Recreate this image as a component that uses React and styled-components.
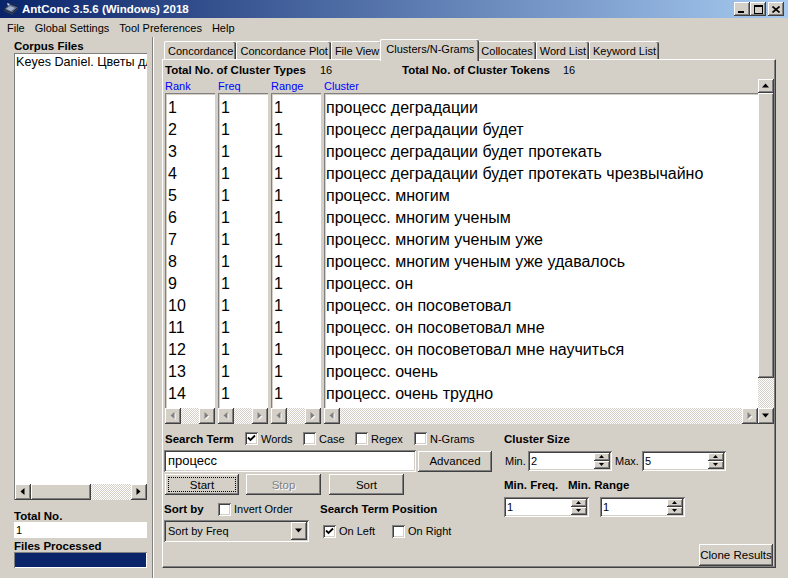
import React from "react";
import styled, { createGlobalStyle, css } from "styled-components";

const FACE = "#d4d0c8";

const GlobalStyle = createGlobalStyle`
  html, body {
    margin: 0;
    padding: 0;
    background: ${FACE};
    overflow: hidden;
  }
  #root {
    width: 788px;
    height: 578px;
  }
`;

// ==== bevels ====

const raised = css`
  background: ${FACE};
  box-shadow: inset -1px -1px #404040, inset 1px 1px #ffffff,
    inset -2px -2px #808080, inset 2px 2px ${FACE};
`;

const sunken = css`
  background: #ffffff;
  box-shadow: inset 1px 1px #808080, inset -1px -1px #ffffff,
    inset 2px 2px #404040, inset -2px -2px ${FACE};
`;

const checker = css`
  background: repeating-conic-gradient(#ffffff 0 25%, ${FACE} 0 50%) 0 0 / 2px 2px;
`;

// ==== data ====

const clusters = [
  "процесс деградации",
  "процесс деградации будет",
  "процесс деградации будет протекать",
  "процесс деградации будет протекать чрезвычайно",
  "процесс. многим",
  "процесс. многим ученым",
  "процесс. многим ученым уже",
  "процесс. многим ученым уже удавалось",
  "процесс. он",
  "процесс. он посоветовал",
  "процесс. он посоветовал мне",
  "процесс. он посоветовал мне научиться",
  "процесс. очень",
  "процесс. очень трудно",
];

const tabs = [
  "Concordance",
  "Concordance Plot",
  "File View",
  "Clusters/N-Grams",
  "Collocates",
  "Word List",
  "Keyword List",
];

// ==== small drawings ====

const Tri = ({ dir, w = 16, h = 16, disabled, small }) => {
  const cx = w / 2 - 0.5;
  const cy = h / 2 - 0.5;
  const a = small ? 1.5 : 2;
  const b = small ? 2.5 : 3.5;
  let pts;
  if (dir === "left") pts = [[cx - a, cy], [cx + a, cy - b], [cx + a, cy + b]];
  if (dir === "right") pts = [[cx + a, cy], [cx - a, cy - b], [cx - a, cy + b]];
  if (dir === "up") pts = [[cx, cy - a], [cx - b, cy + a], [cx + b, cy + a]];
  if (dir === "down") pts = [[cx, cy + a], [cx - b, cy - a], [cx + b, cy - a]];
  const s = (dx) => pts.map(([x, y]) => `${x + dx},${y + dx}`).join(" ");
  return (
    <svg width={w} height={h} style={{ display: "block" }}>
      {disabled && <polygon points={s(1)} fill="#ffffff" />}
      <polygon points={s(0)} fill={disabled ? "#808080" : "#000000"} />
    </svg>
  );
};

const CheckMark = () => (
  <svg width="9" height="9" viewBox="0 0 9 9" style={{ display: "block" }}>
    <path d="M1 3.5 L3.5 6 L8 1.5" stroke="#000" strokeWidth="1.8" fill="none" />
  </svg>
);

const AppIcon = () => (
  <svg width="16" height="16" viewBox="0 0 16 16" style={{ display: "block" }}>
    <path d="M1 8 L7 3 L15 6 L9 12 Z" fill="#5b6b88" stroke="#1d2640" strokeWidth="1" />
    <path d="M3 8 L7 5 L12 7 L8 10 Z" fill="#9fb0cc" />
    <path d="M1 8 L1 10 L9 14 L15 8 L15 6 L9 12 Z" fill="#2e3a58" />
    <path d="M4 2 L7 3 L5 5 Z" fill="#cfd8e8" />
  </svg>
);

// ==== window chrome ====

const Window = styled.div`
  width: 788px;
  height: 578px;
  display: flex;
  flex-direction: column;
  background: ${FACE};
  font-family: "Liberation Sans", Arial, sans-serif;
  font-size: 11px;
  color: #000;
`;

const TitleBar = styled.div`
  flex: none;
  height: 18px;
  display: flex;
  align-items: center;
  padding: 0 4px 0 3px;
  background: linear-gradient(to right, #0a246a, #a6caf0);
`;

const Title = styled.span`
  margin-left: 3px;
  color: #ffffff;
  font-weight: bold;
  font-size: 11.5px;
  white-space: nowrap;
`;

const CaptionGroup = styled.div`
  margin-left: auto;
  display: flex;
`;

const CaptionBtn = styled.div`
  ${raised};
  width: 16px;
  height: 14px;
  margin-left: ${(p) => p.$gap || 0}px;
  display: flex;
  align-items: center;
  justify-content: center;
`;

const MenuBar = styled.div`
  flex: none;
  height: 19px;
  display: flex;
  align-items: center;
  gap: 10px;
  padding-left: 7px;
`;

const Body = styled.div`
  flex: 1;
  display: flex;
  min-height: 0;
`;

// ==== left panel ====

const LeftPanel = styled.div`
  width: 152px;
  box-sizing: border-box;
  padding: 2px 5px 10px 14px;
  display: flex;
  flex-direction: column;
`;

const BoldLabel = styled.div`
  flex: none;
  font-weight: bold;
  font-size: 11.5px;
  height: ${(p) => p.$h || 14}px;
  line-height: ${(p) => p.$h || 14}px;
  width: ${(p) => (p.$w ? `${p.$w}px` : "auto")};
  margin-top: ${(p) => p.$mt || 0}px;
  padding-left: ${(p) => p.$pl || 0}px;
  white-space: nowrap;
  box-sizing: border-box;
`;

const CorpusList = styled.div`
  flex: 1;
  display: flex;
  flex-direction: column;
  background: #ffffff;
  border-top: 1px solid #808080;
  border-left: 1px solid #808080;
  min-height: 0;
`;

const CorpusItems = styled.div`
  flex: 1;
  padding: 1px 0 0 1px;
  font-size: 12.6px;
  line-height: 15px;
  white-space: nowrap;
  overflow: hidden;
`;

const HScroll = styled.div`
  flex: none;
  height: 16px;
  display: flex;
`;

const ScrollBtn = styled.div`
  ${raised};
  flex: none;
  width: 16px;
  height: ${(p) => p.$h || 16}px;
`;

const Thumb = styled.div`
  ${raised};
  flex: none;
  width: ${(p) => (p.$w ? `${p.$w}px` : "auto")};
  height: ${(p) => (p.$h ? `${p.$h}px` : "auto")};
`;

const Trough = styled.div`
  ${checker};
  flex: 1;
`;

const Field = styled.div`
  flex: none;
  height: 16px;
  line-height: 16px;
  padding-left: 2px;
  background: #ffffff;
`;

const ProgressBar = styled.div`
  flex: none;
  height: 16px;
  background: #0a246a;
  box-shadow: inset 1px 1px #808080, inset -1px -1px #ffffff;
`;

const Splitter = styled.div`
  flex: none;
  width: 3px;
  box-shadow: inset 1px 0 #808080, inset 2px 0 #ffffff;
`;

// ==== right panel ====

const RightPanel = styled.div`
  flex: 1;
  display: flex;
  flex-direction: column;
  padding: 0 12px 10px 7px;
  min-width: 0;
`;

const TabStrip = styled.div`
  flex: none;
  height: 22px;
  display: flex;
  align-items: flex-end;
  padding-left: 2px;
`;

const Tab = styled.div`
  position: relative;
  height: ${(p) => (p.$active ? 22 : 18)}px;
  margin: 0 ${(p) => (p.$active ? -2 : 0)}px ${(p) => (p.$active ? -2 : 0)}px;
  padding: 0 ${(p) => (p.$active ? 5 : 3)}px ${(p) => (p.$active ? 3 : 0)}px;
  z-index: ${(p) => (p.$active ? 2 : 1)};
  box-sizing: border-box;
  display: flex;
  align-items: center;
  background: ${FACE};
  border-top: 1px solid #ffffff;
  border-left: 1px solid #ffffff;
  border-radius: 2px 2px 0 0;
  box-shadow: inset -1px 0 #404040, inset -2px 0 #808080;
  white-space: nowrap;
`;

const TabPage = styled.div`
  flex: 1;
  display: flex;
  flex-direction: column;
  padding: 0 0 0 1px;
  border-top: 1px solid #ffffff;
  border-left: 1px solid #ffffff;
  border-right: 1px solid #404040;
  border-bottom: 1px solid #404040;
  box-shadow: inset -1px -1px #808080;
  min-height: 0;
`;

const StatsRow = styled.div`
  flex: none;
  height: 16px;
  margin-top: 2px;
  display: flex;
  align-items: center;
`;

const StatValue = styled.span`
  width: ${(p) => p.$w}px;
  flex: none;
`;

const Results = styled.div`
  flex: none;
  display: flex;
  margin-left: 1px;
  margin-top: 1px;
  margin-right: 1px;
`;

const ColumnsGrid = styled.div`
  flex: 1;
  display: grid;
  grid-template-columns: 50px 50px 50px 1fr;
  grid-template-rows: 14px 315px 16px;
  column-gap: 3px;
  min-width: 0;
`;

const ColHead = styled.div`
  color: #0000ff;
  font-size: 11px;
  line-height: 14px;
`;

const ColList = styled.div`
  background: #ffffff;
  box-shadow: inset 1px 1px #808080, inset 2px 2px ${FACE};
  padding: 4px 0 0 ${(p) => p.$pl || 3}px;
  font-size: 16px;
  overflow: hidden;
`;

const Cell = styled.div`
  height: 22px;
  line-height: 22px;
  white-space: nowrap;
`;

const VScroll = styled.div`
  flex: none;
  width: 16px;
  display: flex;
  flex-direction: column;
`;

// ==== controls ====

const Controls = styled.div`
  flex: 1;
  display: flex;
  margin-top: 7px;
  min-height: 0;
`;

const LeftControls = styled.div`
  width: 340px;
  flex: none;
  display: flex;
  flex-direction: column;
`;

const RightControls = styled.div`
  flex: 1;
  display: flex;
  flex-direction: column;
  align-items: flex-start;
  padding-right: 2px;
  padding-bottom: 1px;
`;

const Row = styled.div`
  flex: none;
  display: flex;
  align-items: center;
  height: ${(p) => p.$h}px;
  margin-top: ${(p) => p.$mt || 0}px;
`;

const CheckItem = styled.label`
  flex: none;
  display: flex;
  align-items: center;
  gap: 3px;
  width: ${(p) => (p.$w ? `${p.$w}px` : "auto")};
  margin-left: ${(p) => p.$ml || 0}px;
  white-space: nowrap;
`;

const Box = styled.span`
  ${sunken};
  width: 13px;
  height: 13px;
  flex: none;
  display: flex;
  align-items: center;
  justify-content: center;
`;

const TextInput = styled.div`
  ${sunken};
  width: 252px;
  height: 22px;
  box-sizing: border-box;
  padding-left: 4px;
  font-size: 13px;
  line-height: 22px;
`;

const Button = styled.div`
  ${raised};
  flex: none;
  width: ${(p) => p.$w}px;
  height: ${(p) => p.$h || 21}px;
  margin-left: ${(p) => p.$ml || 0}px;
  box-sizing: border-box;
  display: flex;
  align-items: center;
  justify-content: center;
  position: relative;
  color: ${(p) => (p.$disabled ? "#808080" : "#000")};
  text-shadow: ${(p) => (p.$disabled ? "1px 1px #ffffff" : "none")};
  font-size: 11.5px;
`;

const FocusRing = styled.span`
  position: absolute;
  inset: 3px;
  border: 1px dotted #000;
`;

const Select = styled.div`
  ${sunken};
  width: 145px;
  height: 22px;
  box-sizing: border-box;
  padding: 2px;
  display: flex;
  align-items: center;
  background: ${FACE};
`;

const SelectText = styled.span`
  flex: 1;
  padding-left: 2px;
`;

const Spin = styled.div`
  ${sunken};
  width: ${(p) => p.$w}px;
  height: 20px;
  box-sizing: border-box;
  padding: 2px;
  margin-left: ${(p) => p.$ml || 0}px;
  display: flex;
  flex: none;
`;

const SpinValue = styled.span`
  flex: 1;
  padding-left: 1px;
  line-height: 16px;
`;

const SpinBtns = styled.div`
  flex: none;
  width: 16px;
  display: flex;
  flex-direction: column;
`;

const SpinHalf = styled.div`
  ${raised};
  flex: 1;
  display: flex;
  align-items: center;
  justify-content: center;
`;

const SmallLabel = styled.span`
  flex: none;
  width: ${(p) => p.$w}px;
  padding-left: ${(p) => p.$pl || 0}px;
  margin-left: ${(p) => p.$ml || 0}px;
  box-sizing: border-box;
`;

const CloneButton = styled(Button)`
  margin-top: auto;
  align-self: flex-end;
`;

// ==== pieces ====

const Check = ({ checked, children, ...rest }) => (
  <CheckItem {...rest}>
    <Box>{checked && <CheckMark />}</Box>
    <span>{children}</span>
  </CheckItem>
);

const SpinBox = ({ value, w, ml }) => (
  <Spin $w={w} $ml={ml}>
    <SpinValue>{value}</SpinValue>
    <SpinBtns>
      <SpinHalf>
        <Tri dir="up" w={8} h={6} small />
      </SpinHalf>
      <SpinHalf>
        <Tri dir="down" w={8} h={6} small />
      </SpinHalf>
    </SpinBtns>
  </Spin>
);

const ColScroll = ({ right = true }) => (
  <HScroll>
    <ScrollBtn>
      <Tri dir="left" disabled />
    </ScrollBtn>
    <Trough />
    {right && (
      <ScrollBtn>
        <Tri dir="right" disabled />
      </ScrollBtn>
    )}
  </HScroll>
);

const App = () => {
  return (
    <Window>
      <GlobalStyle />
      <TitleBar>
        <AppIcon />
        <Title>AntConc 3.5.6 (Windows) 2018</Title>
        <CaptionGroup>
          <CaptionBtn>
            <svg width="8" height="7" style={{ display: "block" }}>
              <rect x="0" y="5" width="6" height="2" fill="#000" />
            </svg>
          </CaptionBtn>
          <CaptionBtn>
            <svg width="9" height="9" style={{ display: "block" }}>
              <rect x="0.5" y="0.5" width="8" height="8" fill="none" stroke="#000" />
              <rect x="0" y="1" width="9" height="1" fill="#000" />
            </svg>
          </CaptionBtn>
          <CaptionBtn $gap={2}>
            <svg width="8" height="7" style={{ display: "block" }}>
              <path d="M0.5 0.5 L7.5 6.5 M7.5 0.5 L0.5 6.5" stroke="#000" strokeWidth="1.6" />
            </svg>
          </CaptionBtn>
        </CaptionGroup>
      </TitleBar>

      <MenuBar>
        <span>File</span>
        <span>Global Settings</span>
        <span>Tool Preferences</span>
        <span>Help</span>
      </MenuBar>

      <Body>
        <LeftPanel>
          <BoldLabel>Corpus Files</BoldLabel>
          <CorpusList>
            <CorpusItems>Keyes Daniel. Цветы для</CorpusItems>
            <HScroll>
              <ScrollBtn>
                <Tri dir="left" />
              </ScrollBtn>
              <Thumb $w={60} />
              <Trough />
              <ScrollBtn>
                <Tri dir="right" />
              </ScrollBtn>
            </HScroll>
          </CorpusList>
          <BoldLabel $mt={10} $h={12}>
            Total No.
          </BoldLabel>
          <Field>1</Field>
          <BoldLabel $mt={2} $h={12}>
            Files Processed
          </BoldLabel>
          <ProgressBar />
        </LeftPanel>

        <Splitter />

        <RightPanel>
          <TabStrip>
            {tabs.map((t) => (
              <Tab key={t} $active={t === "Clusters/N-Grams"}>
                {t}
              </Tab>
            ))}
          </TabStrip>

          <TabPage>
            <StatsRow>
              <BoldLabel $w={156} $pl={1}>
                Total No. of Cluster Types
              </BoldLabel>
              <StatValue $w={82}>16</StatValue>
              <BoldLabel $w={161}>Total No. of Cluster Tokens</BoldLabel>
              <StatValue $w={40}>16</StatValue>
            </StatsRow>

            <Results>
              <ColumnsGrid>
                <ColHead>Rank</ColHead>
                <ColHead>Freq</ColHead>
                <ColHead>Range</ColHead>
                <ColHead>Cluster</ColHead>

                <ColList>
                  {clusters.map((_, i) => (
                    <Cell key={i}>{i + 1}</Cell>
                  ))}
                </ColList>
                <ColList>
                  {clusters.map((_, i) => (
                    <Cell key={i}>1</Cell>
                  ))}
                </ColList>
                <ColList>
                  {clusters.map((_, i) => (
                    <Cell key={i}>1</Cell>
                  ))}
                </ColList>
                <ColList $pl={2}>
                  {clusters.map((c, i) => (
                    <Cell key={i}>{c}</Cell>
                  ))}
                </ColList>

                <ColScroll />
                <ColScroll />
                <ColScroll />
                <ColScroll />
              </ColumnsGrid>

              <VScroll>
                <ScrollBtn $h={14}>
                  <Tri dir="up" h={14} />
                </ScrollBtn>
                <Thumb $h={285} />
                <Trough />
                <ScrollBtn>
                  <Tri dir="down" />
                </ScrollBtn>
              </VScroll>
            </Results>

            <Controls>
              <LeftControls>
                <Row $h={15}>
                  <BoldLabel $w={81} $pl={1}>
                    Search Term
                  </BoldLabel>
                  <Check checked $w={58}>
                    Words
                  </Check>
                  <Check $w={52}>Case</Check>
                  <Check $w={59}>Regex</Check>
                  <Check>N-Grams</Check>
                </Row>

                <Row $h={22} $mt={4}>
                  <TextInput>процесс</TextInput>
                  <Button $w={74} $ml={2}>
                    Advanced
                  </Button>
                </Row>

                <Row $h={21} $mt={2}>
                  <Button $w={74} $ml={1}>
                    <FocusRing />
                    Start
                  </Button>
                  <Button $w={75} $ml={7} $disabled>
                    Stop
                  </Button>
                  <Button $w={75} $ml={8}>
                    Sort
                  </Button>
                </Row>

                <Row $h={14} $mt={7}>
                  <BoldLabel $w={54}>Sort by</BoldLabel>
                  <Check $w={102}>Invert Order</Check>
                  <BoldLabel>Search Term Position</BoldLabel>
                </Row>

                <Row $h={22} $mt={4}>
                  <Select>
                    <SelectText>Sort by Freq</SelectText>
                    <ScrollBtn $h={18}>
                      <Tri dir="down" h={18} />
                    </ScrollBtn>
                  </Select>
                  <Check checked $w={69} $ml={14}>
                    On Left
                  </Check>
                  <Check>On Right</Check>
                </Row>
              </LeftControls>

              <RightControls>
                <Row $h={15}>
                  <BoldLabel>Cluster Size</BoldLabel>
                </Row>
                <Row $h={20} $mt={5}>
                  <SmallLabel $w={24} $pl={1}>
                    Min.
                  </SmallLabel>
                  <SpinBox value="2" w={84} />
                  <SmallLabel $w={27} $ml={3}>
                    Max.
                  </SmallLabel>
                  <SpinBox value="5" w={84} />
                </Row>
                <Row $h={14} $mt={7}>
                  <BoldLabel $w={64}>Min. Freq.</BoldLabel>
                  <BoldLabel>Min. Range</BoldLabel>
                </Row>
                <Row $h={20} $mt={5}>
                  <SpinBox value="1" w={85} />
                  <SpinBox value="1" w={85} ml={11} />
                </Row>
                <CloneButton $w={74} $h={22}>
                  Clone Results
                </CloneButton>
              </RightControls>
            </Controls>
          </TabPage>
        </RightPanel>
      </Body>
    </Window>
  );
};

export default App;
